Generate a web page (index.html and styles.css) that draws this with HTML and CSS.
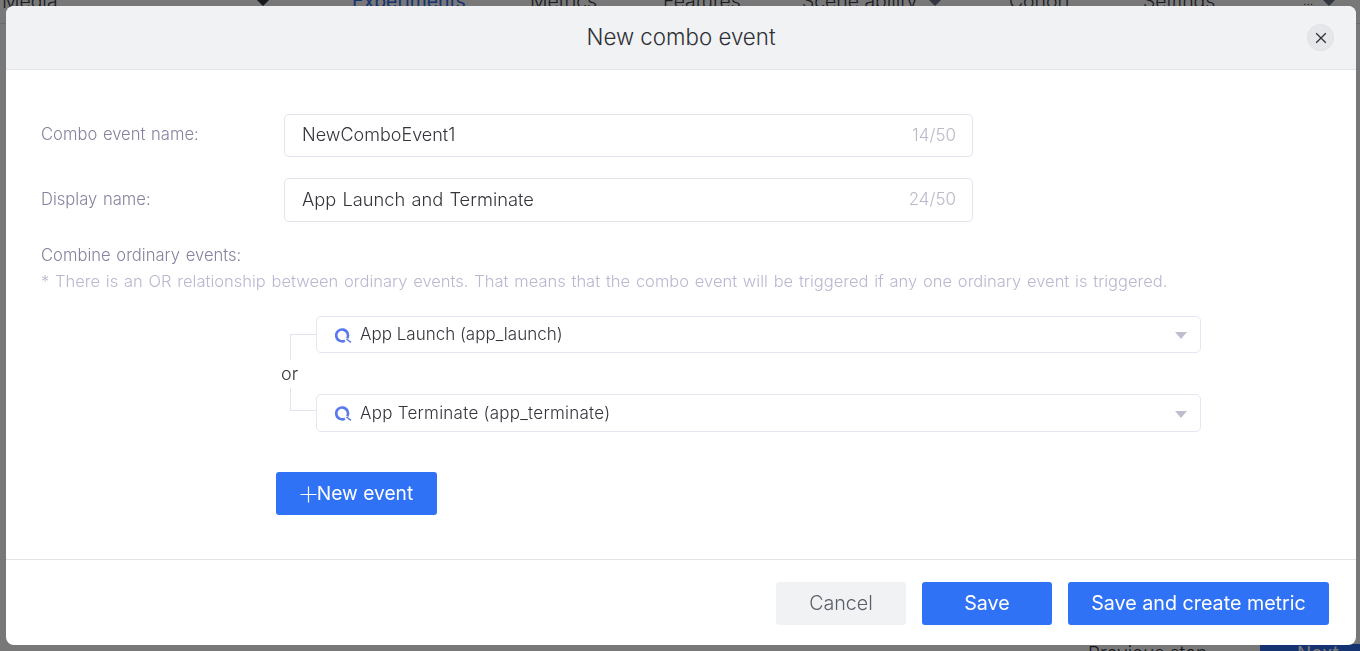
FILE: index.html
```html
<!DOCTYPE html>
<html lang="en">
<head>
<meta charset="utf-8">
<title>New combo event</title>
<link rel="stylesheet" href="styles.css">
</head>
<body>
<div class="page">
  <nav class="topnav">
    <span class="nav-media">Media</span>
    <span class="caret nav-caret1"></span>
    <span class="nav-item nav-active">Experiments</span>
    <span class="nav-item nav-metrics">Metrics</span>
    <span class="nav-item nav-features">Features</span>
    <span class="nav-item nav-scene">Scene ability</span>
    <span class="caret nav-caret2"></span>
    <span class="nav-item nav-cohort">Cohort</span>
    <span class="nav-item nav-settings">Settings</span>
    <span class="nav-item nav-more">...</span>
    <span class="caret nav-caret3"></span>
  </nav>
  <div class="bottom-actions">
    <span class="prev">Previous step</span>
    <span class="next">Next Step</span>
  </div>
</div>
<div class="mask"></div>
<section class="modal">
  <header class="modal-head">
    <h1 class="modal-title">New combo event</h1>
    <button class="close" aria-label="Close">
      <svg width="12" height="12" viewBox="0 0 12 12"><path d="M1.2 1.2 10.8 10.8M10.8 1.2 1.2 10.8" stroke="#2f3136" stroke-width="1.3" fill="none"/></svg>
    </button>
  </header>
  <div class="modal-body">
    <div class="row">
      <label class="label">Combo event name:</label>
      <div class="input"><span class="value">NewComboEvent1</span><span class="count">14/50</span></div>
    </div>
    <div class="row row-two">
      <label class="label">Display name:</label>
      <div class="input input-tall"><span class="value value-spaced">App Launch and Terminate</span><span class="count">24/50</span></div>
    </div>
    <div class="label combine">Combine ordinary events:</div>
    <p class="hint">* There is an OR relationship between ordinary events. That means that the combo event will be triggered if any one ordinary event is triggered.</p>
    <div class="events">
      <div class="connector">
        <span class="bracket bracket-top"></span>
        <span class="or">or</span>
        <span class="bracket bracket-bottom"></span>
      </div>
      <div class="selects">
        <div class="select">
          <svg class="ev-icon" width="18" height="18" viewBox="0 0 18 18"><path d="M10.9 14.6A5.9 5.9 0 1 1 13.2 12.4" fill="none" stroke="#5a78ee" stroke-width="2.6"/><path d="M12.4 13 17 16.4" stroke="#5a78ee" stroke-width="1.5" fill="none"/></svg>
          <span class="sel-text">App Launch (app_launch)</span>
          <span class="sel-caret"></span>
        </div>
        <div class="select select-tall">
          <svg class="ev-icon" width="18" height="18" viewBox="0 0 18 18"><path d="M10.9 14.6A5.9 5.9 0 1 1 13.2 12.4" fill="none" stroke="#5a78ee" stroke-width="2.6"/><path d="M12.4 13 17 16.4" stroke="#5a78ee" stroke-width="1.5" fill="none"/></svg>
          <span class="sel-text">App Terminate (app_terminate)</span>
          <span class="sel-caret"></span>
        </div>
      </div>
    </div>
    <button class="btn btn-primary btn-new"><svg class="plus" width="17" height="17" viewBox="0 0 17 17"><path d="M8.5 0.5V16.5M0.5 8.5H16.5" stroke="#fff" stroke-width="1.2" fill="none"/></svg>New event</button>
  </div>
  <footer class="modal-foot">
    <button class="btn btn-cancel">Cancel</button>
    <button class="btn btn-primary btn-save">Save</button>
    <button class="btn btn-primary btn-metric">Save and create metric</button>
  </footer>
</section>
</body>
</html>
```
FILE: styles.css
```css
* { box-sizing: border-box; }
html, body { margin: 0; height: 100%; overflow: hidden; }
body { font-family: "Inter", "Liberation Sans", sans-serif; background: #fff; color: #33353b; }
.page { position: absolute; inset: 0; overflow: hidden; }
.topnav { display: flex; align-items: center; height: 33px; margin-top: -9px; border-bottom: 1px solid #dfe1e6; font-size: 19.4px; font-weight: 300; color: #3a3d45; line-height: 18px; position: relative; }
.topnav > * { position: absolute; top: 1px; }
.nav-media { left: 2px; }
.nav-active { left: 352px; color: #2f6df0; font-weight: 400; }
.nav-metrics { left: 530px; }
.nav-features { left: 663px; }
.nav-scene { left: 802px; }
.nav-cohort { left: 1009px; }
.nav-settings { left: 1143px; }
.nav-more { left: 1303px; font-size: 12px; }
.topnav > .caret { width: 0; height: 0; border-left: 6px solid transparent; border-right: 6px solid transparent; border-top: 6px solid #33353b; top: 9px; }
.nav-caret1 { left: 257px; }
.topnav > .nav-caret2 { left: 929px; border-top-color: #6d7588; }
.topnav > .nav-caret3 { left: 1323px; border-top-color: #6d7588; }
.bottom-actions { position: absolute; left: 1088px; top: 644px; display: flex; font-size: 19px; font-weight: 300; line-height: 20px; }
.prev { width: 172px; color: #33353b; }
.next { background: #2f6df0; color: #fff; width: 120px; height: 30px; padding-left: 37px; font-weight: 400; }
.mask { position: fixed; inset: 0; background: rgba(0,0,0,.53); }
.modal { position: absolute; left: 6px; top: 6px; width: 1350px; height: 639px; background: #fff; border-radius: 8px; overflow: hidden; display: flex; flex-direction: column; }
.modal-head { flex: none; height: 64px; background: #f1f2f4; border-bottom: 1px solid #e1e3e6; display: flex; align-items: center; justify-content: center; position: relative; padding-bottom: 3px; }
.modal-title { margin: 0; font-size: 22.3px; font-weight: 300; color: #2f3136; }
.close { position: absolute; left: 1301px; top: 18px; width: 27px; height: 27px; border-radius: 50%; background: #e6e7ea; border: 1px solid #e0e1e4; padding: 0; display: flex; align-items: center; justify-content: center; }
.modal-body { flex: 1; padding: 44px 0 0 35px; }
.row { display: flex; align-items: center; }
.row-two { margin-top: 21px; }
.label { font-size: 16.6px; word-spacing: 1px; font-weight: 300; color: #85839f; }
.row .label { width: 243px; flex: none; padding-bottom: 3px; }
.input { width: 689px; height: 43px; border: 1px solid #e3e3ee; border-radius: 5px; display: flex; align-items: center; justify-content: space-between; padding: 0 16px 0 17px; }
.input-tall { height: 44px; }
.value { font-size: 18px; font-weight: 300; color: #33353b; padding-bottom: 2px; }
.value-spaced { font-size: 18.3px; word-spacing: 1px; }
.count { font-size: 17px; font-weight: 300; color: #b9b9cb; padding-bottom: 2px; }
.combine { margin-top: 23px; line-height: 20px; }
.hint { margin: 6px 0 0; font-size: 16.5px; word-spacing: 1.15px; font-weight: 300; line-height: 20px; color: #b9b8d0; white-space: nowrap; }
.events { display: flex; margin: 25px 0 0 239px; }
.connector { width: 36px; flex: none; position: relative; height: 116px; }
.bracket { position: absolute; left: 10px; width: 26px; border-left: 1px solid #e3e3ee; }
.bracket-top { top: 18px; height: 26px; border-top: 1px solid #e3e3ee; }
.bracket-bottom { top: 72px; height: 23px; border-bottom: 1px solid #e3e3ee; }
.or { position: absolute; left: 1px; top: 46px; font-size: 18px; font-weight: 300; line-height: 24px; color: #33353b; }
.selects { display: flex; flex-direction: column; gap: 41px; }
.select { width: 885px; height: 37px; border: 1px solid #e6e6f3; border-radius: 5px; display: flex; align-items: center; padding: 0 13px 0 17px; }
.select-tall { height: 38px; }
.select-tall .sel-text { letter-spacing: .25px; }
.ev-icon { flex: none; margin-right: 8px; }
.sel-text { font-size: 17px; font-weight: 300; color: #33353b; flex: 1; padding-bottom: 1px; }
.sel-caret { width: 0; height: 0; border-left: 6px solid transparent; border-right: 6px solid transparent; border-top: 7px solid #bfbecf; margin-top: 2px; }
.btn { border: 0; border-radius: 3px; height: 43px; font: inherit; font-size: 19.7px; font-weight: 300; padding: 0 0 2px; display: inline-flex; align-items: center; justify-content: center; }
.btn-primary { background: #3072f6; color: #fff; font-weight: 400; }
.btn-new { width: 161px; margin: 40px 0 0 235px; font-size: 19.2px; }
.plus { margin-right: 0; margin-top: 4px; }
.modal-foot { flex: none; height: 86px; border-top: 1px solid #e1e3e6; display: flex; justify-content: flex-end; gap: 16px; padding: 22px 27px 0 0; }
.btn-cancel { width: 130px; background: #f1f2f4; color: #5a5f69; }
.btn-save { width: 130px; }
.btn-metric { width: 261px; }
```
